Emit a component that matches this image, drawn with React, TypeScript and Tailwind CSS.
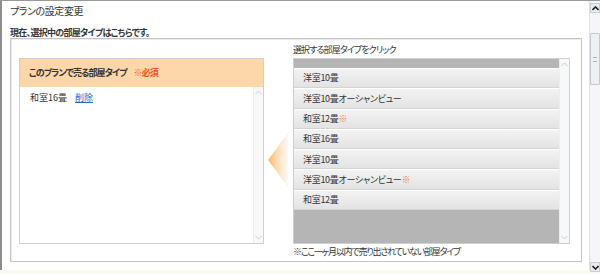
import type { ReactNode } from 'react'

const ROOMS: { name: string; mark?: boolean }[] = [
  { name: '洋室10畳' },
  { name: '洋室10畳オーシャンビュー' },
  { name: '和室12畳', mark: true },
  { name: '和室16畳' },
  { name: '洋室10畳' },
  { name: '洋室10畳オーシャンビュー', mark: true },
  { name: '和室12畳' },
]

function Chevron({ up, dark }: { up?: boolean; dark?: boolean }) {
  return (
    <svg width="7" height="5" viewBox="0 0 7 5" className={up ? '' : 'rotate-180'}>
      <path d="M0.5 4 L3.5 1 L6.5 4" fill="none" stroke={dark ? '#222' : '#c8ccd2'} strokeWidth={dark ? 1.6 : 1} />
    </svg>
  )
}

/* tiny inner scroll column used by both boxes */
function MiniScroll() {
  return (
    <div className="w-[10px] shrink-0 bg-[#f7f8fa] border-l border-[#eceef1] flex flex-col justify-between items-center py-[3px]">
      <Chevron up />
      <Chevron />
    </div>
  )
}

function Panel({ children }: { children: ReactNode }) {
  return <div className="border border-[#cfcfcf] bg-white">{children}</div>
}

export default function App() {
  return (
    <div className="w-[600px] h-[274px] bg-white overflow-hidden text-[#333] [font-family:'Noto_Sans_CJK_JP',sans-serif] [font-feature-settings:'palt']">
      <div className="h-[270px] flex border-t border-[#9a9a9a]">
        {/* page */}
        <div className="flex-1 border-l-2 border-[#8c8c8c] pl-[8px] pr-[7px]">
          <h1 className="text-[10px] leading-none mt-[5px] h-[12px] tracking-[-0.4px]">プランの設定変更</h1>
          <p className="text-[9px] font-bold leading-none mt-[10px] h-[9px] tracking-[-0.7px]">現在、選択中の部屋タイプはこちらです。</p>

          <div className="mt-[1px] h-[224px] border border-[#c4c4c4] shadow-[inset_1px_1px_0_#ececec] flex pl-[8px]">
            {/* left: chosen room types */}
            <div className="w-[245px] mt-[19px] h-[186px] flex flex-col border border-[#cfcfcf]">
              <div className="h-[28px] bg-[#fdd6aa] flex items-center pl-[9px] text-[9px] font-bold tracking-[-0.9px]">
                このプランで売る部屋タイプ
                <span className="ml-[7px] text-[#e8561e]">※必須</span>
              </div>
              <div className="flex-1 flex">
                <div className="flex-1 pl-[10px] pt-[2px] text-[9px] flex gap-[8px] h-[20px] items-center">
                  <span>和室16畳</span>
                  <a href="#" className="text-[#2266cc] underline">削除</a>
                </div>
                <MiniScroll />
              </div>
            </div>

            {/* arrow */}
            <div className="w-[29px] flex items-center pl-[4px] pt-[19px]">
              <svg width="20" height="54" viewBox="0 0 20 54">
                <defs>
                  <linearGradient id="ar" x1="0" y1="0" x2="1" y2="0">
                    <stop offset="0" stopColor="#fbb462" />
                    <stop offset="1" stopColor="#fde6cc" stopOpacity="0.35" />
                  </linearGradient>
                </defs>
                <path d="M0 27 L20 0 L20 54 Z" fill="url(#ar)" />
              </svg>
            </div>

            {/* right: selectable room types */}
            <div className="w-[277px] pt-[5px]">
              <p className="text-[9px] leading-none h-[14px] pt-[1px] tracking-[-0.9px]">選択する部屋タイプをクリック</p>
              <Panel>
                <div className="h-[184px] flex">
                  <div className="flex-1 flex flex-col bg-[#b5b5b5]">
                    <div className="h-[9px]" />
                    {ROOMS.map((r, i) => (
                      <div
                        key={i}
                        className="h-[20.3px] shrink-0 flex items-center pl-[9px] text-[9px] tracking-[-0.3px] border-t border-white border-b border-b-[#d4d4d4] bg-gradient-to-b from-[#f3f3f3] to-[#e3e3e3]"
                      >
                        {r.name}
                        {r.mark && <span className="text-[#f07a3a]">※</span>}
                      </div>
                    ))}
                  </div>
                  <MiniScroll />
                </div>
              </Panel>
              <p className="text-[9px] leading-none mt-[3px] tracking-[-1.2px]">※ここ一ヶ月以内で売り出されていない部屋タイプ</p>
            </div>
          </div>
        </div>

        {/* window scrollbar */}
        <div className="w-[11px] border-l border-[#dcdfe4] bg-[#f4f6f9] flex flex-col items-center pt-[2px]">
          <div className="w-[10px] h-[10px] bg-[#e9ecf0] border border-[#c9cdd4] flex items-center justify-center">
            <Chevron up dark />
          </div>
          <div className="mt-[20px] w-[10px] h-[52px] bg-[#eef0f4] border border-[#c4c8cf] rounded-[1px] flex items-center justify-center">
            <div className="w-[4px] h-[5px] border-y border-[#aab0b8]" />
          </div>
          <div className="flex-1" />
          <div className="w-[10px] h-[10px] bg-[#e9ecf0] border border-[#c9cdd4] flex items-center justify-center mb-[-2px]">
            <Chevron dark />
          </div>
        </div>
      </div>
      <div className="h-[4px] bg-[#fafaf0]" />
    </div>
  )
}
